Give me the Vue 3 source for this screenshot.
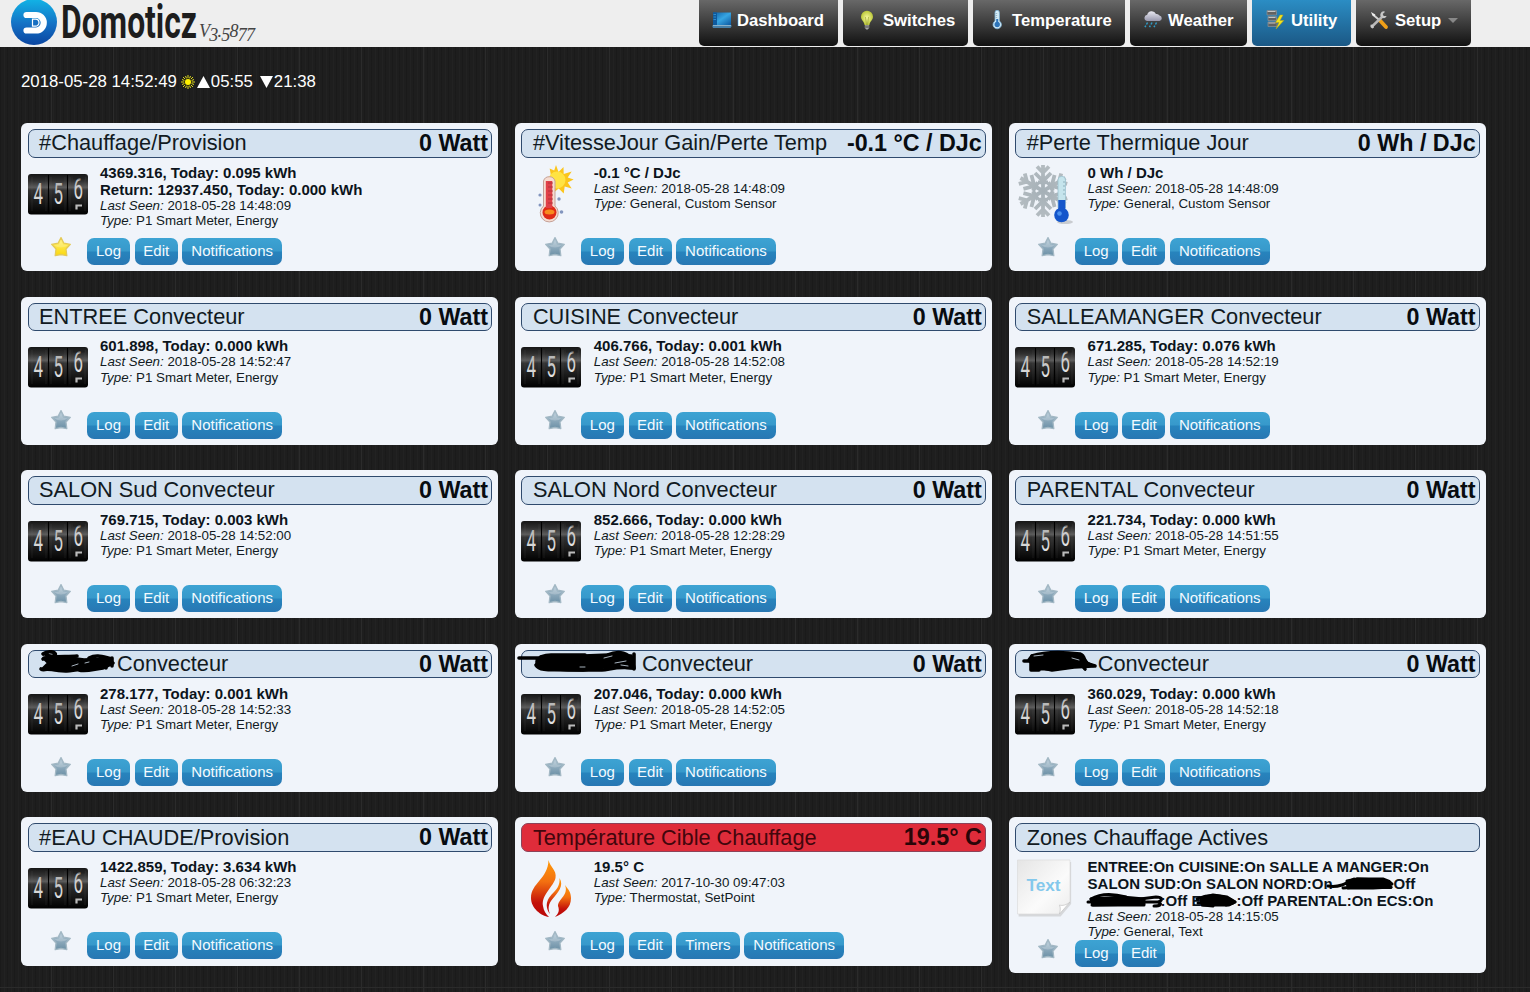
<script setup>
const tabs = [
  { label: 'Dashboard', icon: 'dashboard', w: 139 },
  { label: 'Switches', icon: 'bulb', w: 125 },
  { label: 'Temperature', icon: 'thermo', w: 152 },
  { label: 'Weather', icon: 'cloud', w: 117 },
  { label: 'Utility', icon: 'utility', w: 99, active: true },
  { label: 'Setup', icon: 'tools', w: 115, caret: true },
]

const P1 = 'P1 Smart Meter, Energy'
const std = ['Log', 'Edit', 'Notifications']
const meter = (title, value, lines, seen, extra = {}) => ({
  title, value, lines, seen: `2018-05-28 ${seen}`, type: P1, icon: 'meter', buttons: std, ...extra,
})

const cards = [
  meter('#Chauffage/Provision', '0 Watt', ['4369.316, Today: 0.095 kWh', 'Return: 12937.450, Today: 0.000 kWh'], '14:48:09', { fav: true }),
  { title: '#VitesseJour Gain/Perte Temp', value: '-0.1 °C / DJc', lines: ['-0.1 °C / DJc'], seen: '2018-05-28 14:48:09', type: 'General, Custom Sensor', icon: 'hot', buttons: std },
  { title: '#Perte Thermique Jour', value: '0 Wh / DJc', lines: ['0 Wh / DJc'], seen: '2018-05-28 14:48:09', type: 'General, Custom Sensor', icon: 'cold', buttons: std },
  meter('ENTREE Convecteur', '0 Watt', ['601.898, Today: 0.000 kWh'], '14:52:47'),
  meter('CUISINE Convecteur', '0 Watt', ['406.766, Today: 0.001 kWh'], '14:52:08'),
  meter('SALLEAMANGER Convecteur', '0 Watt', ['671.285, Today: 0.076 kWh'], '14:52:19'),
  meter('SALON Sud Convecteur', '0 Watt', ['769.715, Today: 0.003 kWh'], '14:52:00'),
  meter('SALON Nord Convecteur', '0 Watt', ['852.666, Today: 0.000 kWh'], '12:28:29'),
  meter('PARENTAL Convecteur', '0 Watt', ['221.734, Today: 0.000 kWh'], '14:51:55'),
  meter('Convecteur', '0 Watt', ['278.177, Today: 0.001 kWh'], '14:52:33', { mask: 1 }),
  meter('Convecteur', '0 Watt', ['207.046, Today: 0.000 kWh'], '14:52:05', { mask: 2 }),
  meter('Convecteur', '0 Watt', ['360.029, Today: 0.000 kWh'], '14:52:18', { mask: 3 }),
  meter('#EAU CHAUDE/Provision', '0 Watt', ['1422.859, Today: 3.634 kWh'], '06:32:23'),
  { title: 'Température Cible Chauffage', value: '19.5° C', lines: ['19.5° C'], seen: '2017-10-30 09:47:03', type: 'Thermostat, SetPoint', icon: 'flame', buttons: ['Log', 'Edit', 'Timers', 'Notifications'], alert: true },
  { title: 'Zones Chauffage Actives', value: '', zones: true, lines: [], seen: '2018-05-28 14:15:05', type: 'General, Text', icon: 'text', buttons: ['Log', 'Edit'] },
]
</script>

<template>
  <div class="page">
    <svg class="defs" width="0" height="0">
      <defs>
        <linearGradient id="gLogo" x1="0" y1="0" x2="0" y2="1"><stop offset="0" stop-color="#12b4e6" /><stop offset=".55" stop-color="#1470c4" /><stop offset="1" stop-color="#0a45a0" /></linearGradient>
        <linearGradient id="gScreen" x1="0" y1="0" x2="1" y2="1"><stop offset="0" stop-color="#0d5ea6" /><stop offset=".5" stop-color="#37a5e2" /><stop offset="1" stop-color="#0b57a0" /></linearGradient>
        <radialGradient id="gBulb"><stop offset="0" stop-color="#f8f9a0" /><stop offset="1" stop-color="#bcc83a" /></radialGradient>
        <linearGradient id="gCloud" x1="0" y1="0" x2="0" y2="1"><stop offset="0" stop-color="#e9e9f1" /><stop offset="1" stop-color="#9797ad" /></linearGradient>
        <linearGradient id="gMeter" x1="0" y1="0" x2="0" y2="1"><stop offset="0" stop-color="#161616" /><stop offset=".17" stop-color="#303030" /><stop offset=".33" stop-color="#5c5c5c" /><stop offset=".4" stop-color="#333" /><stop offset=".72" stop-color="#171717" /><stop offset="1" stop-color="#000" /></linearGradient>
        <linearGradient id="gDigit" x1="0" y1="0" x2="0" y2="1"><stop offset="0" stop-color="#aaa" /><stop offset="1" stop-color="#f2f2f2" /></linearGradient>
        <linearGradient id="gFlame" x1="0" y1="0" x2="0" y2="1"><stop offset="0" stop-color="#ff9a08" /><stop offset=".38" stop-color="#f37011" /><stop offset=".75" stop-color="#c3110a" /><stop offset="1" stop-color="#b90606" /></linearGradient>
        <linearGradient id="gPaper" x1="0" y1="0" x2="1" y2="1"><stop offset="0" stop-color="#e5e5e5" /><stop offset=".6" stop-color="#fbfbfb" /><stop offset="1" stop-color="#ececec" /></linearGradient>
        <linearGradient id="gStarOff" x1="0" y1="0" x2="0" y2="1"><stop offset="0" stop-color="#b9cdd9" /><stop offset=".5" stop-color="#8fabbd" /><stop offset="1" stop-color="#6c90a6" /></linearGradient>
        <linearGradient id="gStarOn" x1="0" y1="0" x2="0" y2="1"><stop offset="0" stop-color="#fff27a" /><stop offset="1" stop-color="#fbd80c" /></linearGradient>
        <linearGradient id="gSnow" gradientUnits="userSpaceOnUse" x1="0" y1="-24" x2="0" y2="24"><stop offset="0" stop-color="#b3bbc0" /><stop offset="1" stop-color="#97a5ae" /></linearGradient>
      </defs>
    </svg>

    <header class="bar">
      <div class="brand">
        <svg class="logo" width="198" height="47" viewBox="0 0 198 47">
          <circle cx="34" cy="22" r="23" fill="url(#gLogo)" />
          <path d="M26.500 15H36a7.400 7.400 0 0 1 0 15.500H26.500" fill="none" stroke="#fff" stroke-width="6.200" stroke-linecap="round" />
          <path d="M32.500 19.200h3a3.500 3.500 0 0 1 0 7h-3z" fill="#176fc2" stroke="#fff" stroke-width="1.200" />
          <text class="wordmark" x="61" y="38" textLength="136" lengthAdjust="spacingAndGlyphs">Domoticz</text>
        </svg>
        <span class="version">V<sub>3</sub>.<sub>5</sub>8<sub>77</sub></span>
      </div>
      <nav class="tabs">
        <a v-for="t in tabs" :key="t.label" class="tab" :class="{ active: t.active }" :style="{ width: t.w + 'px' }">
          <svg class="tab-icon" width="20" height="20" viewBox="0 0 20 20">
            <g v-if="t.icon === 'dashboard'">
              <path d="M1 2.500H19V15H1z" fill="url(#gScreen)" /><path d="M1 2.500H5V15H1z" fill="#0e5a9e" />
              <path d="M1.500 4.500H4M1.500 7H4M1.500 9.500H4" stroke="#3d99d4" stroke-width=".8" />
              <path d="M0 15.500H20L18.500 18H1z" fill="#467fa8" /><path d="M1 15.500H19" stroke="#9cc8e2" stroke-width=".8" />
            </g>
            <g v-else-if="t.icon === 'bulb'">
              <path d="M11 .800a6 6 0 0 1 6 6c0 3.200-3 4.600-3.600 8.200H8.600C8 11.400 5 10 5 6.800a6 6 0 0 1 6-6z" fill="url(#gBulb)" />
              <path d="M9.500 7l1 8M12.500 7l-1 8" stroke="#8f972c" stroke-width=".6" /><path d="M8.800 15.200h4.400v2.600l-1.400 1.600h-1.600l-1.400-1.600z" fill="#a8a8a8" /><path d="M8.800 17h4.400" stroke="#444" />
            </g>
            <g v-else-if="t.icon === 'thermo'">
              <path d="M9 2.500a2.200 2.200 0 0 1 4.400 0V11a4.200 4.200 0 1 1-4.400 0z" fill="#d5edf9" stroke="#7db3d5" stroke-width=".8" />
              <circle cx="11.200" cy="14.500" r="2.700" fill="#2d74b9" /><path d="M11.200 9v5" stroke="#2d74b9" stroke-width="2" /><path d="M9.700 3.500h1.500M9.700 5.500h1.500M9.700 7.500h1.500" stroke="#7593a5" stroke-width=".6" />
            </g>
            <g v-else-if="t.icon === 'cloud'">
              <path d="M4 11a3.200 3.200 0 0 1 .2-6.300A4.700 4.700 0 0 1 13 4a3.300 3.300 0 0 1 3.500 1.500A2.800 2.800 0 0 1 16.500 11z" fill="url(#gCloud)" />
              <path d="M4.500 12.500l-1 2M9 12.500l-1 2M13.500 12.500l-1 2M2.800 15.600l-.8 1.600M7.300 15.600l-.8 1.600M11.800 15.600l-.8 1.600" stroke="#2e9bc6" stroke-width="1.500" />
            </g>
            <g v-else-if="t.icon === 'utility'">
              <path d="M2 .500h9.500V5H2zM3 6.500h8.500v4H3zM3 12h9v4.500H3z" fill="#626262" stroke="#8e9498" stroke-width=".7" />
              <path d="M2.500 1.500h8M3.500 7.500h7M3.500 13h7" stroke="#c4c4c4" stroke-width="1.200" />
              <path d="M15 5L10.500 12.500h3.500l-3 6.500L18.800 10.500H15L18 5z" fill="#f6e51c" stroke="#b9a512" stroke-width=".5" />
            </g>
            <g v-else>
              <path d="M5 5.500L12 11.500" stroke="#d4d4d4" stroke-width="2" /><path d="M2 2l1.500 3.700L5.500 6.500 6.300 4.500z" fill="#eee" />
              <path d="M11 10.500L17 17" stroke="#ef9f18" stroke-width="3.800" stroke-linecap="round" />
              <path d="M3.500 16L13.500 6.500" stroke="#b9b9b9" stroke-width="2.500" />
              <path d="M16.200 1.800a3.300 3.300 0 1 0 1.500 4.300l-3-.2-1-2z" fill="#c8c8c8" /><path d="M1.800 14.500l2.400.4.800 2.600-1.600 1A3 3 0 0 1 1.800 14.500z" fill="#c8c8c8" />
            </g>
          </svg>
          <span :class="'label-' + t.icon">{{ t.label }}</span>
          <i v-if="t.caret" class="caret"></i>
        </a>
      </nav>
    </header>

    <div class="clock">
      <span>2018-05-28 14:52:49</span>
      <svg class="sun" width="14" height="14" viewBox="-7 -7 14 14">
        <path d="M0-7V7M-7 0H7M-5-5L5 5M5-5L-5 5M-2.500-6L2.500 6M2.500-6L-2.500 6M-6-2.500L6 2.500M-6 2.500L6-2.500" stroke="#f5ee1d" stroke-width=".9" /><circle r="3.900" fill="#33310d" /><circle r="3" fill="#fff200" />
      </svg>
      <svg class="tri" width="13" height="12" viewBox="0 0 13 12"><path d="M6.500 0L13 12H0z" fill="#fff" /></svg>
      <span>05:55</span>
      <svg class="tri down" width="13" height="12" viewBox="0 0 13 12"><path d="M0 0H13L6.500 12z" fill="#fff" /></svg>
      <span>21:38</span>
    </div>

    <main class="grid">
      <article v-for="(c, i) in cards" :key="i" class="card">
        <h2 class="head" :class="{ alert: c.alert }">
          <span class="title">
            <svg v-if="c.mask === 1" class="mask" width="78" height="26" viewBox="0 0 78 26">
              <path class="solid" d="M5 7L22 6L45 9L66 8L74 12L66 16L40 18L22 19L4 18L10 12z" />
              <path d="M4 3c5-4 14-2 12 1-3 3-10-1-10-1M4 8c6-3 24-2 34-3M2 18c3 2 7-1 10 0 12 3 20 2 30 0M50 7c8-4 14-1 23 1M40 19c7 2 15-1 24-2M67 7v10M73 7v8" />
              <path class="gap" d="M33 15l6-2M46 12l4-1" />
            </svg>
            <svg v-else-if="c.mask === 2" class="mask" width="109" height="26" viewBox="0 0 109 26">
              <path class="solid" d="M8 6L50 5L76 4L98 5L101 17L78 15L50 19L12 18L4 13z" />
              <path d="M-14 7H26M4 11c0-5 8-7 14-7h34M3 14c4 7 20 4 32 5h34c7 0 13-4 31-2M75 4c11-5 23-1 21 4M101 3V18" />
              <path class="gap" d="M47 16h5M71 7l8-2M82 12l11-2M88 14l7 1" />
            </svg>
            <svg v-else-if="c.mask === 3" class="mask" width="71" height="26" viewBox="0 0 71 26">
              <path class="solid" d="M5 5L38 3L53 4L60 12L66 15L47 16L25 19L8 15L2 9z" />
              <path d="M-3 10H8M5 5c15-5 32-4 48-2 6 2 3 8 8 10l7 2M6 16c15 4 26 1 37 0M4 12v7M5 19h7M54 13l4 5" />
              <path class="gap" d="M7 5l9-1M45 7l7 2" />
            </svg>{{ c.title }}</span>
          <span class="value">{{ c.value }}</span>
        </h2>

        <div class="body">
          <div class="pic">
            <svg v-if="c.icon === 'meter'" class="meter" width="60" height="41" viewBox="0 0 60 41">
              <rect width="60" height="40.500" rx="3" fill="url(#gMeter)" />
              <path d="M20.500 1V39M39.500 1V39" stroke="#000" stroke-width="1" /><path d="M4 3V37M18 3V37M23 3V37M37 3V37M42 3V37M57 3V37" stroke="#777" stroke-width=".5" opacity=".3" />
              <g class="digits" fill="url(#gDigit)">
                <text x="5.500" y="30" textLength="9.500" lengthAdjust="spacingAndGlyphs">4</text>
                <text x="25.500" y="30" textLength="9.500" lengthAdjust="spacingAndGlyphs">5</text>
                <text x="45.500" y="24.500" textLength="9.500" lengthAdjust="spacingAndGlyphs">6</text>
              </g>
              <path d="M45 2h12v3.500H45z" fill="#1c1c1c" opacity=".6" />
              <path d="M54 31.500H48.500V35.500" fill="none" stroke="#bbb" stroke-width="2.200" />
            </svg>
            <svg v-else-if="c.icon === 'hot'" class="big hot" width="60" height="62" viewBox="0 0 60 62">
              <path d="M39 0l2.500 7 5-5 .2 7 8-2.500-4 6 6 2-6 3 4 6-7-2-1 7-5-5-5 4-4-24 4.500 2z" fill="#fbc51c" /><circle cx="40" cy="15" r="8.500" fill="#ffe343" />
              <path d="M26.500 16a6 6 0 0 1 11.500 0V41a9 9 0 1 1-11.500 0z" fill="#f6dcd0" stroke="#c5a096" />
              <circle cx="32.500" cy="47.500" r="7" fill="#df2b16" /><path d="M28.800 16h6.500V43h-6.500z" fill="#e04048" /><ellipse cx="32.500" cy="47" rx="5" ry="2.500" fill="#f88b1d" />
              <path d="M31 18h5M31 22h5M31 26h5M31 30h5M31 34h5M31 38h5" stroke="#a83039" stroke-width=".8" />
              <g fill="#8295be"><circle cx="23" cy="30" r="1.600" /><circle cx="42" cy="34" r="1.700" /><circle cx="23" cy="40" r="1.500" /><circle cx="44.500" cy="47" r="1.800" /></g>
            </svg>
            <svg v-else-if="c.icon === 'cold'" class="big" width="60" height="62" viewBox="0 0 60 62">
              <g fill="none" stroke="url(#gSnow)" stroke-width="3.800" transform="translate(28 26)">
                <path v-for="n in 6" :key="n" :transform="`rotate(${n * 60})`" d="M0 0V-26M-6-24.500L0-18.500L6-24.500M-8-18L0-10L8-18M-5-8.700L5-8.700" />
              </g>
              <ellipse cx="50" cy="57" rx="8" ry="2" fill="#c9ccd0" />
              <path d="M43 15a3.500 3.500 0 0 1 7.500 0V43H43z" fill="#c5e4ec" stroke="#95bdcb" stroke-width=".7" /><path d="M43.300 35h7v12h-7z" fill="#1556cb" /><circle cx="46.500" cy="50" r="7.300" fill="#1556cb" /><circle cx="44.500" cy="48.500" r="2.300" fill="#4d92ee" />
              <path d="M48 17h2M48 21h2M48 25h2M48 29h2" stroke="#769ba9" stroke-width=".7" />
            </svg>
            <svg v-else-if="c.icon === 'flame'" class="big" width="60" height="62" viewBox="0 0 60 62">
              <path d="M27.500 1C29 8 36 11 34.500 19 33 27 20 36 22 47c.7 5 3 8 6 11C20 57 10 49 10 39 10 24 27 20 27.500 1z" fill="url(#gFlame)" />
              <path d="M38.500 19c5 8-2 15-7 21-4 5-5 9-2.500 15C22 45 28 38 33 33c4-4 6-8 5.500-14z" fill="url(#gFlame)" />
              <path d="M44 26c3 4 6 7 6 13 0 10-7 15-16 19 3-3 5-6 3-11 0-7 11-11 7-21z" fill="url(#gFlame)" />
            </svg>
            <svg v-else class="big" width="60" height="62" viewBox="0 0 60 62">
              <path d="M3 2H55.500V44L45 56.500H3z" fill="#bbb" opacity=".5" transform="translate(.6 .9)" />
              <path d="M2.500 1H55V43L44.500 55H2.500z" fill="url(#gPaper)" stroke="#d8d8d8" stroke-width=".6" /><path d="M44.500 55c1-4 1-6 0-9 3 1 7 0 10.500-3z" fill="#fff" stroke="#c6c6c6" stroke-width=".8" />
              <text class="paper-text" x="11.500" y="32" textLength="34" lengthAdjust="spacingAndGlyphs">Text</text>
            </svg>
          </div>
          <div class="info">
            <template v-if="c.zones">
              <b>ENTREE:On CUISINE:On SALLE A MANGER:On</b>
              <b>SALON SUD:On SALON NORD:On<svg class="scrib" width="61" height="14" viewBox="0 0 61 14"><path class="solid" d="M14 4L24 2L48 3L56 7L58 10L40 11L15 11z" /><path d="M-5 9C6 11 14 6 21 2M10 11l15-1 33 .500M24 2h26c4 1 7 3 9 5M46 10l7-6" /></svg>Off</b>
              <b><svg class="scrib" width="73" height="14" viewBox="0 0 73 14"><path class="solid" d="M3 5L34 3L56 5L56 10L5 11z" /><path d="M0 8h70M3 5c10-6 24-5 35-2M4 11h52M44 6l24-3c6 0 8 3 2 5 5 2 2 4-4 4" /></svg>:Off E<svg class="scrib" width="35" height="14" viewBox="0 0 35 14"><path class="solid" d="M0 4L12 1L26 3L34 8L28 11L1 11z" /><path d="M-4 5c10-4 25-6 38 3M-3 9h33M2 11l10 1M25 11l7-2" /></svg>:Off PARENTAL:On ECS:On</b>
            </template>
            <b v-for="l in c.lines" :key="l">{{ l }}</b>
            <p><i>Last Seen:</i> {{ c.seen }}</p>
            <p><i>Type:</i> {{ c.type }}</p>
          </div>
        </div>

        <div class="actions">
          <svg class="star" width="22" height="22" viewBox="0 0 22 22">
            <path d="M11 1.600L13.900 7.200L20.300 8.300L16 13L16.800 19.600L11 18.500L5.200 19.600L6 13L1.700 8.300L8.100 7.200z" stroke-linejoin="round" stroke-width="1.300" :fill="c.fav ? 'url(#gStarOn)' : 'url(#gStarOff)'" :stroke="c.fav ? '#e4ca58' : '#a3b8c4'" />
            <path d="M11 4L13 8.500L18 9.500C13 12 9 12 4 9.500L9 8.500z" fill="#fff" opacity=".2" />
          </svg>
          <a v-for="b in c.buttons" :key="b" class="btn" :class="b.toLowerCase()">{{ b }}</a>
        </div>
      </article>
    </main>
  </div>
</template>

<style>
body { margin: 0; background: #1e1e1e; overflow: hidden; }
</style>

<style scoped>
.page {
  box-sizing: border-box;
  width: 1530px;
  height: 992px;
  overflow: hidden;
  font-family: "Liberation Sans", Arial, sans-serif;
  color: #111a22;
  background:
    linear-gradient(#2b2b2b, #2b2b2b) 0 987px / 100% 1px no-repeat,
    repeating-linear-gradient(90deg, transparent 0 51px, #2b2b2b 51px 52px, transparent 52px 62px),
    repeating-linear-gradient(90deg, rgba(0, 0, 0, .13) 0 1px, transparent 1px 4px, rgba(255, 255, 255, .02) 4px 5px, transparent 5px 7px),
    #1e1e1e;
}
.defs { position: absolute; }
.bar {
  display: flex;
  justify-content: space-between;
  box-sizing: border-box;
  height: 47px;
  padding-right: 59px;
  background: #eee;
}
.brand { display: flex; }
.logo { display: block; flex: none; overflow: visible; }
.wordmark { font: 700 46px Roboto, sans-serif; fill: #1d1d1d; }
.version {
  margin: 20px 0 0 1px;
  font: italic 18px/22px "Liberation Serif", serif;
  letter-spacing: -.75px;
  color: #444;
}
.version sub { font-size: inherit; line-height: 0; vertical-align: -4px; }
.tabs { display: flex; gap: 5px; }
.tab {
  display: flex;
  align-items: flex-start;
  box-sizing: border-box;
  height: 46px;
  padding: 11px 0 0 13px;
  border-radius: 0 0 5px 5px;
  background: linear-gradient(#686868, #111);
  color: #fff;
  font-size: 16.67px;
  font-weight: 700;
  line-height: 20px;
  white-space: nowrap;
}
.tab.active { background: linear-gradient(#2b8dc4, #1b5885); }
.tab-icon { flex: none; margin: -1px 5px 0 0; }
.label-bulb { margin-left: 2px; }
.label-thermo, .label-utility, .label-tools { margin-left: 1px; }
.caret { margin: 7px 0 0 7px; border: 5px solid transparent; border-top-color: #888; border-bottom: 0; }
.clock {
  display: flex;
  align-items: center;
  height: 20px;
  padding: 25px 0 0 21px;
  color: #fff;
  font-size: 16.8px;
}
.sun { margin-left: 4px; }
.tri { margin: 0 1px 0 2px; }
.tri.down { margin: 0 1px 0 7px; }
.grid {
  display: grid;
  grid-template-columns: repeat(3, 476.8px);
  grid-auto-rows: 148.300px;
  gap: 25.300px 17px;
  align-items: start;
  padding: 31px 0 0 21.400px;
}
.card {
  box-sizing: border-box;
  min-height: 148.300px;
  padding: 6px 6.200px;
  border-radius: 6px;
  background: #f0f4fa;
}
.head {
  display: flex;
  justify-content: space-between;
  box-sizing: border-box;
  height: 28.500px;
  margin: 0;
  padding: 0 3px 0 10.500px;
  border: 1px solid #2f4a6d;
  border-radius: 7px;
  background: #d4e2f0;
  font-size: 21.75px;
  font-weight: 400;
  line-height: 26px;
  white-space: nowrap;
}
.title { margin-top: .2px; }
.head.alert { background: #df2c3a; color: #42060c; border-color: #8c4258; }
.value { font-size: 23.3px; font-weight: 700; line-height: 27px; color: #080c10; }
.alert .value { color: #2a0508; }
.mask { vertical-align: top; overflow: visible; }
.mask path, .scrib path { fill: none; stroke: #000; stroke-width: 3.6; stroke-linecap: round; stroke-linejoin: round; }
.mask .solid, .scrib .solid { fill: #000; }
.mask .gap { stroke: #b9c6d3; stroke-width: .9; }
.scrib { overflow: visible; vertical-align: -2px; }
.scrib path { stroke-width: 3; }
.body { display: flex; min-height: 80.500px; }
.pic { flex: none; width: 72.400px; }
.meter { display: block; margin-top: 16px; overflow: visible; }
.big { display: block; margin-top: 7px; overflow: visible; }
.hot { margin-left: -4px; }
.digits text { font: 400 29px Roboto, sans-serif; }
.paper-text { font: 700 17px "Liberation Sans", sans-serif; fill: #83c8ec; }
.info { padding-top: 7px; font-size: 13.33px; line-height: 15.2px; white-space: nowrap; }
.info b { position: relative; top: -.7px; display: block; height: 17px; font-size: 15px; line-height: 17px; color: #0c141c; }
.info p { position: relative; top: -.7px; margin: 0; }
.actions { display: flex; align-items: flex-start; gap: 4.700px; padding-left: 22.200px; }
.star { flex: none; margin: -2.500px 10.600px 0 0; }
.btn {
  box-sizing: border-box;
  height: 27px;
  border-radius: 7px;
  background: linear-gradient(#3da3d3, #3799cb 48%, #2784bd 52%, #2877b3);
  color: #f3faff;
  font-size: 15px;
  line-height: 26.5px;
  text-align: center;
}
.log, .edit { width: 43px; }
.notifications { width: 99.500px; }
.timers { width: 63.500px; }
</style>
